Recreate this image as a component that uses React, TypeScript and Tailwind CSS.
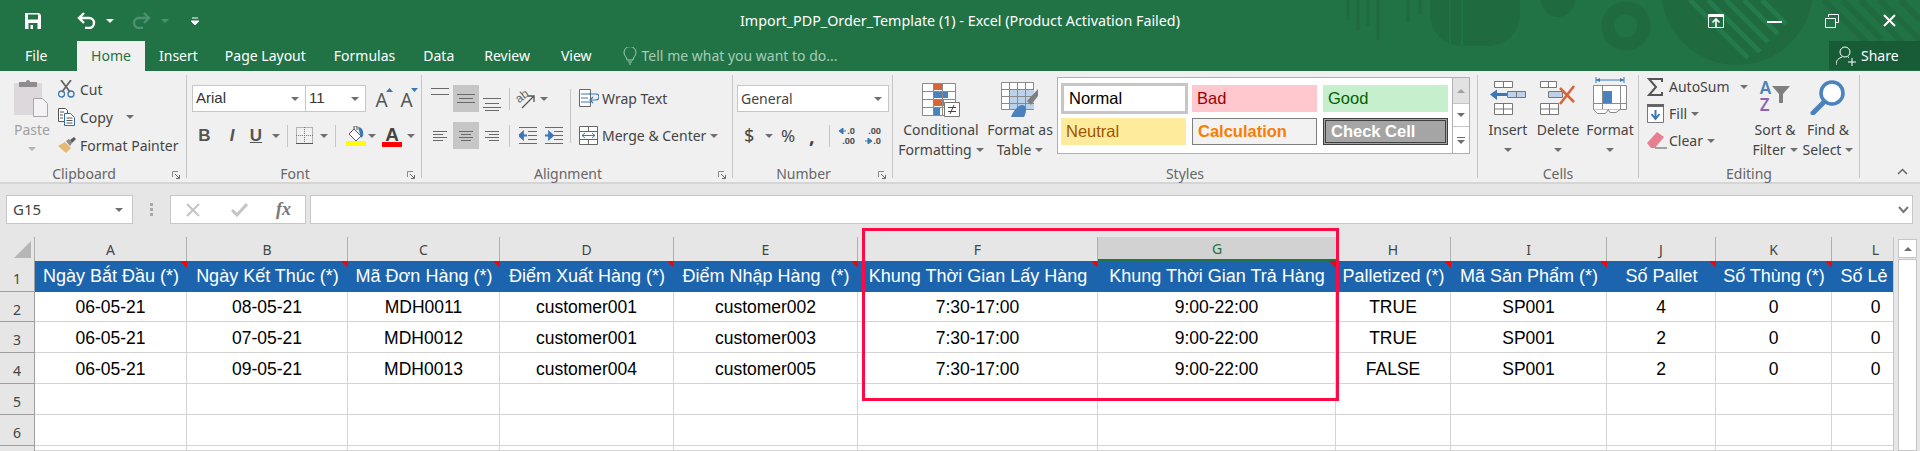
import { ReactNode } from "react";

const Caret = ({ className = "" }: { className?: string }) => (
  <svg width="8" height="4" viewBox="0 0 8 4" className={`shrink-0 ${className}`}>
    <path d="M0 0h8L4 4z" fill="#6f6f6f" />
  </svg>
);

const Sep = ({ className = "" }: { className?: string }) => (
  <span className={`block w-px bg-[#c6c6c6] shrink-0 ${className}`} />
);

const Launcher = () => (
  <svg width="8" height="8" viewBox="0 0 8 8" className="absolute right-[6px] bottom-[-1px]">
    <path d="M.5 6V.5H6" fill="none" stroke="#8a8a8a" />
    <path d="M3 3l4 4M7.5 4v3.5H4" fill="none" stroke="#6a6a6a" />
  </svg>
);

const Group = ({
  className,
  label,
  launcher,
  children,
}: {
  className: string;
  label: string;
  launcher?: boolean;
  children: ReactNode;
}) => (
  <div className={`relative flex flex-col h-[103px] border-r border-[#c6c6c6] shrink-0 ${className}`}>
    <div className="h-[93px]">{children}</div>
    <div className={`h-[10px] flex items-center justify-center text-[14px] text-[#666] ${launcher ? "pr-[18px]" : ""}`}>
      {label}
    </div>
    {launcher && <Launcher />}
  </div>
);

const BigButton = ({
  className,
  icon,
  line1,
  line2,
}: {
  className: string;
  icon: ReactNode;
  line1: string;
  line2?: string;
}) => (
  <div className={`flex flex-col items-center shrink-0 ${className}`}>
    <div className="h-[45px] pt-[5px] flex justify-center">{icon}</div>
    <div className="h-[20px] leading-[20px] whitespace-nowrap">{line1}</div>
    <div className="h-[20px] leading-[20px] whitespace-nowrap flex items-center gap-[4px]">
      {line2}
      <Caret />
    </div>
  </div>
);

const Lines = ({ xs, ys }: { xs: [number, number][]; ys: number[] }) => (
  <svg width="26" height="27" viewBox="0 0 26 27">
    {ys.map((y, i) => {
      const [a, b] = xs[i % xs.length];
      return <path key={y} d={`M${a} ${y + 0.5}H${b}`} stroke="#6a6a6a" />;
    })}
  </svg>
);

const AlignCell = ({ active, xs, ys }: { active?: boolean; xs: [number, number][]; ys: number[] }) => (
  <div className={`w-[26px] h-[27px] shrink-0 ${active ? "bg-[#c6c6c6]" : ""}`}>
    <Lines xs={xs} ys={ys} />
  </div>
);

const TitleArt = () => (
  <svg width="640" height="71" viewBox="1280 0 640 71" className="absolute right-0 top-0">
    <g fill="none" stroke="#1f6a3e">
      <path d="M1348 0v20M1358 0v30M1368 0v26M1378 0v40" strokeWidth="3" />
      <path d="M1408 0v22M1420 0v14" strokeWidth="3" />
      <circle cx="1626" cy="26" r="18" strokeWidth="13" />
    </g>
    <path d="M1430 0h90v14a32 32 0 0 1-32 32h-26a32 32 0 0 1-32-32z" fill="#1f6a3e" />
    <path d="M1450 0v46M1462 0v46" stroke="#217346" strokeWidth="2" />
    <circle cx="1558" cy="0" r="17" fill="#1f6a3e" />
    <circle cx="1737" cy="-11" r="76" fill="#1f6a3e" />
    <path d="M1690 0l58 58M1708 0l52 52M1726 0l42 42M1744 0l34 34M1762 0l24 24" stroke="#237a4a" strokeWidth="5" />
    <path d="M1824 0l52 52M1842 0l40 40M1860 0l60 60M1880 0l40 40M1900 0l20 20" stroke="#1f6a3e" strokeWidth="6" />
  </svg>
);

const SaveIcon = () => (
  <svg width="16" height="16" viewBox="0 0 16 16" className="shrink-0">
    <path
      fillRule="evenodd"
      d="M0 0h14l2 2v14H0zM3 1.500v5h10v-5zM3.500 10v6h9v-6z"
      fill="#fff"
    />
    <path d="M5.500 12h2.500v4H5.500z" fill="#fff" />
  </svg>
);

const UndoIcon = ({ color }: { color: string }) => (
  <svg width="19" height="17" viewBox="0 0 19 17" className="shrink-0">
    <path d="M7 1L2 6l5 5M2 6h10a5 5 0 0 1 0 10H8" fill="none" stroke={color} strokeWidth="2.400" />
  </svg>
);

const PasteIcon = () => (
  <svg width="36" height="38" viewBox="0 0 36 38" className="shrink-0">
    <path d="M0 4h28v32H0z" fill="#dcd8dc" />
    <path d="M5 3h7a2 2 0 0 1 4 0h7v5H5z" fill="#8f8b8f" />
    <path d="M19.500 19.500h9l5 5v13h-14z" fill="#f4f2f4" stroke="#a9a5a9" />
  </svg>
);

const CutIcon = () => (
  <svg width="17" height="18" viewBox="0 0 17 18">
    <path d="M3 0l9 12M13 0L4 12" stroke="#666" strokeWidth="1.800" fill="none" />
    <circle cx="3.500" cy="14" r="3" fill="none" stroke="#3b78b5" strokeWidth="1.300" />
    <circle cx="13" cy="14" r="3" fill="none" stroke="#3b78b5" strokeWidth="1.300" />
  </svg>
);

const CopyIcon = () => (
  <svg width="17" height="18" viewBox="0 0 17 18">
    <path d="M.5.500h7l2 2v11H.500z" fill="#fff" stroke="#555" />
    <path d="M6.500 5.500h6l4 4v8h-10z" fill="#fff" stroke="#2f6ea5" />
    <path d="M2 4h4M2 7h3M2 10h3M8.500 10h6M8.500 12.500h6M8.500 15h6" stroke="#555" />
  </svg>
);

const PainterIcon = () => (
  <svg width="18" height="16" viewBox="0 0 18 16">
    <path d="M0 9l7-4 6 6-5 5z" fill="#e7b872" />
    <path d="M8 4l3-2 3 4-2 3z" fill="#8a8a8a" />
    <path d="M12 3l4-3 2 2-4 4z" fill="#5a5a5a" />
  </svg>
);

const FontSizeIcon = ({ up }: { up?: boolean }) => (
  <span className="relative w-[15px] h-[24px] text-[19px] leading-[26px] text-center text-[#555]">
    A
    <svg width="7" height="4" viewBox="0 0 7 4" className="absolute right-[-4px] top-[1px]">
      <path d={up ? "M0 4h7L3.500 0z" : "M0 0h7L3.500 4z"} fill="#3b78b5" />
    </svg>
  </span>
);

const BorderIcon = () => (
  <svg width="17" height="17" viewBox="0 0 17 17" className="ml-[8px] shrink-0">
    <path d="M.5.500h16v16H.500z" fill="none" stroke="#777" strokeDasharray="1 1" />
    <path d="M8.500 0v17M0 8.500h17" stroke="#777" strokeDasharray="1 1" />
    <path d="M0 16.500h17" stroke="#555" />
  </svg>
);

const FillIcon = () => (
  <svg width="20" height="20" viewBox="0 0 20 20" className="ml-[10px] shrink-0">
    <path d="M8 3l7 7-5 5-7-7z" fill="#fff" stroke="#555" />
    <path d="M8 3V0h3v4" fill="none" stroke="#555" />
    <path d="M12 1c4 0 6 4 5 9l-2 2-1-4z" fill="#3b78b5" />
    <path d="M0 15h20v5H0z" fill="#ffff00" />
  </svg>
);

const FontColorIcon = () => (
  <span className="relative w-[20px] h-[24px] ml-[6px] shrink-0 text-center text-[19px] leading-[22px] font-bold text-[#444] font-['Liberation_Sans',sans-serif]">
    A
    <span className="absolute left-0 bottom-[1px] w-[20px] h-[5px] bg-[#ff0000]" />
  </span>
);

const OrientIcon = () => (
  <svg width="20" height="20" viewBox="0 0 20 20" className="shrink-0 overflow-visible">
    <text x="0" y="11" fontSize="12" fill="#666" transform="rotate(-38 6 10)" fontFamily="Liberation Sans">ab</text>
    <path d="M5 19L17 7M11 7h6v6" fill="none" stroke="#555" strokeWidth="1.300" />
  </svg>
);

const WrapIcon = () => (
  <svg width="20" height="19" viewBox="0 0 20 19" className="shrink-0">
    <path d="M.5.500h11v17H.500z" fill="#fff" stroke="#666" />
    <path d="M2 5h9M2 9h7M2 13h9" stroke="#3b78b5" />
    <path d="M10 5h7a2.500 2.500 0 0 1 0 6h-5M14 8l-3 3 3 3" fill="none" stroke="#3b78b5" strokeWidth="1.200" />
  </svg>
);

const MergeIcon = () => (
  <svg width="19" height="19" viewBox="0 0 19 19" className="shrink-0">
    <path d="M.5.500h18v18H.500z" fill="#fff" stroke="#666" />
    <path d="M0 5.500h19M0 13.500h19M9.500 0v5M9.500 14v5" stroke="#666" />
    <path d="M3 9.500h13M6 7L3 9.500 6 12M13 7l3 2.500-3 2.500" fill="none" stroke="#3b78b5" />
  </svg>
);

const IndentIcon = ({ flip }: { flip?: boolean }) => (
  <svg width="18" height="18" viewBox="0 0 18 18" className={`shrink-0 ${flip ? "ml-[8px]" : "ml-[9px]"}`}>
    <path d="M0 .500h18M9 4.500h9M9 8.500h9M9 12.500h9M0 16.500h18" stroke="#6a6a6a" />
    {flip ? (
      <path d="M0 8.500h6M4 5l4 3.500-4 3.500z" stroke="#3b78b5" strokeWidth="1.800" fill="#3b78b5" />
    ) : (
      <path d="M8 8.500H3M4 5L0 8.500 4 12z" stroke="#3b78b5" strokeWidth="1.800" fill="#3b78b5" />
    )}
  </svg>
);

const DecimalIcon = ({ more }: { more?: boolean }) => (
  <div className="relative w-[16px] h-[20px] shrink-0 text-[9px] leading-[10px] font-bold text-[#555] font-['Noto_Sans',sans-serif]">
    <div className="absolute top-0 right-0">{more ? ".00" : ".0"}</div>
    <div className="absolute bottom-0 right-0">{more ? ".0" : ".00"}</div>
    <svg width="7" height="6" viewBox="0 0 7 6" className={`absolute left-0 ${more ? "bottom-[2px]" : "top-[2px]"}`}>
      <path d={more ? "M0 3h4M3 0l4 3-4 3z" : "M7 3H3M4 0L0 3l4 3z"} stroke="#3b78b5" fill="#3b78b5" />
    </svg>
  </div>
);

const CondIcon = () => (
  <svg width="38" height="34" viewBox="0 0 38 34">
    <path d="M.5.500h33v32H.500z" fill="#fff" stroke="#8a8a8a" />
    <path d="M12 1h8v6h-8z" fill="#d9643a" />
    <path d="M12 9h14v6H12z" fill="#4a82bd" />
    <path d="M12 17h10v6H12z" fill="#d9643a" />
    <path d="M12 25h6v7h-6z" fill="#4a82bd" />
    <path d="M0 8.500h34M0 16.500h34M0 24.500h34M11.500 0v33M20.500 0v33" stroke="#8a8a8a" />
    <path d="M22.500 19.500h15v14h-15z" fill="#fff" stroke="#777" />
    <path d="M26 24.500h8M26 28.500h8M32 22l-4 9" stroke="#444" fill="none" />
  </svg>
);

const TableIcon = () => (
  <svg width="38" height="36" viewBox="0 0 38 36">
    <path d="M.5.500h32v27H.500z" fill="#fff" stroke="#8a8a8a" />
    <path d="M9 7h24v20H9z" fill="#bcd2ea" />
    <path d="M0 7.500h33M0 14.500h33M0 21.500h33M8.500 0v28M16.500 0v28M24.500 0v28" stroke="#8a8a8a" />
    <path d="M26 19L37 7v7l-7 9z" fill="#7f7f7f" />
    <path d="M10 35c2-6 7-12 11-12 5 0 5 6 2 12z" fill="#4a82bd" />
  </svg>
);

const InsertIcon = () => (
  <svg width="36" height="36" viewBox="0 0 36 36">
    <path d="M4.500 1.500h18v6h-18zM13.500 1.500v6M4.500 23.500h18v11h-18zM4.500 29h18M13.500 23v12" fill="#fff" stroke="#777" />
    <path d="M17.500 11.500h18v6h-18z" fill="#bcd2ea" stroke="#777" />
    <path d="M26.500 11v7" stroke="#777" />
    <path d="M0 14.500l7-5v3.500h10v3H7V20z" fill="#3b78b5" />
  </svg>
);

const DeleteIcon = () => (
  <svg width="36" height="36" viewBox="0 0 36 36">
    <path d="M.5 1.500h16v6h-16zM8.500 1.500v6M.5 23.500h18v11H.500zM.5 29h18M9.500 23v12" fill="#fff" stroke="#777" />
    <path d="M8.500 11.500h14v6h-14z" fill="#bcd2ea" stroke="#777" />
    <path d="M20 8l14 14M34 6L20 24" stroke="#d9643a" strokeWidth="2.600" />
  </svg>
);

const FormatIcon = () => (
  <svg width="34" height="38" viewBox="0 0 34 38" className="-mt-[4px]">
    <path d="M3 4h28M3 1v6M31 1v6" stroke="#3b78b5" fill="none" />
    <path d="M7 2L3 4l4 2zM27 2l4 2-4 2z" fill="#3b78b5" />
    <path d="M.5 9.500h33v24H.500z" fill="#fff" stroke="#8a8a8a" />
    <path d="M0 27.500h34M9.500 10v24M27.500 10v24" stroke="#8a8a8a" />
    <path d="M10 15h9v12h-9z" fill="#4a82bd" />
    <path d="M.5 33.500l4 4h8l3-4M15 33.500l2 3h6l4-3" fill="#fff" stroke="#8a8a8a" />
  </svg>
);

const SigmaIcon = () => (
  <svg width="16" height="18" viewBox="0 0 16 18">
    <path d="M15 4V1H2l7 8-7 8h13v-3" fill="none" stroke="#555" strokeWidth="2" />
  </svg>
);

const FillDownIcon = () => (
  <svg width="17" height="19" viewBox="0 0 17 19">
    <path d="M.5.500h16v18H.500z" fill="#fff" stroke="#777" />
    <path d="M0 0h17v3H0z" fill="#666" />
    <path d="M8.500 6v8M4.500 10l4 5 4-5" fill="none" stroke="#3b78b5" strokeWidth="2" />
  </svg>
);

const EraserIcon = () => (
  <svg width="20" height="17" viewBox="0 0 20 17">
    <path d="M0 11L10 0l7 5-9 11H4z" fill="#e87f90" />
    <path d="M8 16h12" stroke="#555" />
  </svg>
);

const SortIcon = () => (
  <div className="flex items-start gap-[1px] -mt-[1px]">
    <div className="flex flex-col text-[17px] leading-[17px] font-semibold">
      <span className="text-[#4a82bd]">A</span>
      <span className="text-[#8e62b8]">Z</span>
    </div>
    <svg width="18" height="18" viewBox="0 0 18 18" className="mt-[7px]">
      <path d="M0 0h18l-7 8v9H7V8z" fill="#7f7f7f" />
    </svg>
  </div>
);

const FindIcon = () => (
  <svg width="36" height="35" viewBox="0 0 36 35">
    <circle cx="22" cy="13" r="11" fill="#fff" stroke="#4a82bd" strokeWidth="3.500" />
    <path d="M14 22L3 33" stroke="#4a82bd" strokeWidth="5" strokeLinecap="round" />
  </svg>
);

const StyleCell = ({ className, children }: { className: string; children: string }) => (
  <div className={`flex items-center pl-[5px] shrink-0 font-['Liberation_Sans',sans-serif] text-[16.500px] ${className}`}>
    {children}
  </div>
);

const tabs = [
  { label: "Insert", className: "ml-[14px]" },
  { label: "Page Layout", className: "ml-[27px]" },
  { label: "Formulas", className: "ml-[28px]" },
  { label: "Data", className: "ml-[28px]" },
  { label: "Review", className: "ml-[30px]" },
  { label: "View", className: "ml-[31px]" },
];

const columns = ["A", "B", "C", "D", "E", "F", "G", "H", "I", "J", "K", "L"];

const headers = [
  "Ngày Bắt Đầu (*)",
  "Ngày Kết Thúc (*)",
  "Mã Đơn Hàng (*)",
  "Điểm Xuất Hàng (*)",
  "Điểm Nhập Hàng  (*)",
  "Khung Thời Gian Lấy Hàng",
  "Khung Thời Gian Trả Hàng",
  "Palletized (*)",
  "Mã Sản Phẩm (*)",
  "Số Pallet",
  "Số Thùng (*)",
  "Số Lẻ (*)",
];

const rows = [
  ["06-05-21", "08-05-21", "MDH0011", "customer001", "customer002", "7:30-17:00", "9:00-22:00", "TRUE", "SP001", "4", "0", "0"],
  ["06-05-21", "07-05-21", "MDH0012", "customer001", "customer003", "7:30-17:00", "9:00-22:00", "TRUE", "SP001", "2", "0", "0"],
  ["06-05-21", "09-05-21", "MDH0013", "customer004", "customer005", "7:30-17:00", "9:00-22:00", "FALSE", "SP001", "2", "0", "0"],
  Array(12).fill(""),
  Array(12).fill(""),
  Array(12).fill(""),
];

const RowHead = ({ n }: { n: number }) => (
  <div className="flex justify-center pt-[8px] text-[14px] leading-[20px] text-[#444] bg-[#e6e6e6] border-r border-b border-[#9f9f9f]">
    {n}
  </div>
);

export default function App() {
  return (
    <div className="relative w-[1920px] h-[451px] overflow-hidden bg-[#e6e6e6] text-[14px] text-[#444] font-['Noto_Sans',sans-serif]">
      <div className="relative h-[71px] bg-[#217346] text-white overflow-hidden">
        <TitleArt />
        <div className="relative h-[41px] flex items-center">
          <div className="ml-[25px]"><SaveIcon /></div>
          <div className="ml-[36px]"><UndoIcon color="#fff" /></div>
          <Caret className="ml-[10px] [&>path]:fill-white" />
          <div className="ml-[18px] -scale-x-100"><UndoIcon color="#4f9070" /></div>
          <Caret className="ml-[10px] [&>path]:fill-[#4f9070]" />
          <svg width="8" height="8" viewBox="0 0 8 8" className="ml-[22px]">
            <path d="M1 1h6M0 4h8L4 8z" stroke="#fff" fill="#fff" />
          </svg>
          <div className="absolute left-0 right-0 top-0 h-[41px] flex items-center justify-center text-[14.300px]">
            Import_PDP_Order_Template (1) - Excel (Product Activation Failed)
          </div>
          <div className="ml-auto mr-[24px] flex items-center">
            <svg width="16" height="14" viewBox="0 0 16 14">
              <path d="M.5.500h15v13H.500z" fill="none" stroke="#fff" />
              <path d="M0 2h16" stroke="#fff" strokeWidth="2" />
              <path d="M8 13V5M4.500 8.500L8 5l3.500 3.500" fill="none" stroke="#fff" strokeWidth="1.600" />
            </svg>
            <span className="ml-[43px] w-[15px] h-[2px] bg-white mt-[3px]" />
            <svg width="14" height="14" viewBox="0 0 14 14" className="ml-[43px]">
              <path d="M3.500 3V.5h10v8H11" fill="none" stroke="#fff" />
              <path d="M.5 4.500h10v9H.500z" fill="none" stroke="#fff" />
            </svg>
            <svg width="13" height="13" viewBox="0 0 13 13" className="ml-[44px]">
              <path d="M1 1l11 11M12 1L1 12" stroke="#fff" strokeWidth="2" />
            </svg>
          </div>
        </div>
        <div className="relative h-[30px] flex items-stretch text-[14px] leading-[30px]">
          <div className="ml-[25px] w-[52px]">File</div>
          <div className="w-[68px] text-center bg-[#f0f0f0] text-[#217346]">Home</div>
          {tabs.map((t) => (
            <div key={t.label} className={`whitespace-nowrap ${t.className}`}>{t.label}</div>
          ))}
          <svg width="14" height="18" viewBox="0 0 14 18" className="ml-[31px] mt-[6px]">
            <path d="M4 13c0-3-3-4-3-7.500a6 6 0 0 1 12 0C13 9 10 10 10 13zM5 15h4M6 17h2" fill="none" stroke="#a4ccb6" />
          </svg>
          <div className="ml-[5px] text-[#a4ccb6] whitespace-nowrap">Tell me what you want to do...</div>
          <div className="ml-auto w-[91px] h-[29px] bg-[#185c37] flex items-center pl-[7px]">
            <svg width="20" height="20" viewBox="0 0 20 20">
              <circle cx="9" cy="6" r="5" fill="none" stroke="#fff" />
              <path d="M0 19c0-5 3-7 6-8M12 11l1 .5M12 16h8M16 12v8" fill="none" stroke="#fff" />
            </svg>
            <span className="ml-[5px]">Share</span>
          </div>
        </div>
      </div>

      <div className="h-[113px] bg-[#f0f0f0] border-b-2 border-[#d5d5d5] flex items-start pt-[4px]">
        <Group className="w-[187px]" label="Clipboard" launcher>
          <div className="flex">
            <div className="w-[58px] flex flex-col items-center pl-[6px] text-[#a0a0a0]">
              <div className="h-[44px] pt-[4px]"><PasteIcon /></div>
              <div className="h-[22px] leading-[22px]">Paste</div>
              <Caret className="mt-[6px] [&>path]:fill-[#b5b5b5]" />
            </div>
            <div className="flex flex-col">
              <div className="h-[28px] flex items-center"><div className="w-[22px]"><CutIcon /></div>Cut</div>
              <div className="h-[28px] flex items-center"><div className="w-[22px]"><CopyIcon /></div>Copy<Caret className="ml-[13px]" /></div>
              <div className="h-[28px] flex items-center whitespace-nowrap"><div className="w-[22px]"><PainterIcon /></div>Format Painter</div>
            </div>
          </div>
        </Group>

        <Group className="w-[235px]" label="Font" launcher>
          <div className="pl-[5px] pt-[10px]">
            <div className="flex h-[27px] items-center">
              <div className="w-[114px] h-[27px] bg-white border border-[#c6c6c6] flex items-center justify-between pl-[3px] pr-[6px] font-['Liberation_Sans',sans-serif] text-[15px] text-[#333]">
                Arial<Caret />
              </div>
              <div className="w-[60px] h-[27px] bg-white border border-l-0 border-[#c6c6c6] flex items-center justify-between pl-[3px] pr-[6px] font-['Liberation_Sans',sans-serif] text-[15px] text-[#333]">
                11<Caret />
              </div>
              <div className="ml-[8px] flex gap-[10px]"><FontSizeIcon up /><FontSizeIcon /></div>
            </div>
            <div className="flex h-[27px] mt-[10px] items-center text-[#555] font-['Liberation_Sans',sans-serif] text-[17px]">
              <div className="w-[25px] text-center font-bold">B</div>
              <div className="w-[30px] text-center font-bold italic">I</div>
              <div className="w-[18px] text-center font-bold underline">U</div>
              <Caret className="ml-[7px]" />
              <Sep className="ml-[7px] h-[22px]" />
              <BorderIcon />
              <Caret className="ml-[7px]" />
              <Sep className="ml-[7px] h-[22px]" />
              <FillIcon />
              <Caret className="ml-[2px]" />
              <FontColorIcon />
              <Caret className="ml-[5px]" />
            </div>
          </div>
        </Group>

        <Group className="w-[311px]" label="Alignment" launcher>
          <div className="pl-[5px] pt-[10px] flex">
            <div>
              <div className="flex items-center h-[27px]">
                <AlignCell xs={[[4, 22]]} ys={[3, 9]} />
                <AlignCell active xs={[[4, 22], [6, 20]]} ys={[9, 13, 17]} />
                <AlignCell xs={[[4, 22], [6, 20]]} ys={[13, 18, 22, 25]} />
                <Sep className="ml-[4px] h-[22px]" />
                <div className="ml-[7px]"><OrientIcon /></div>
                <Caret className="ml-[3px]" />
              </div>
              <div className="flex items-center h-[27px] mt-[10px]">
                <AlignCell xs={[[6, 20], [6, 16]]} ys={[9, 12, 15, 18]} />
                <AlignCell active xs={[[6, 20], [8, 18]]} ys={[9, 12, 15, 18]} />
                <AlignCell xs={[[6, 20], [10, 20]]} ys={[9, 12, 15, 18]} />
                <Sep className="ml-[4px] h-[22px]" />
                <IndentIcon />
                <IndentIcon flip />
              </div>
            </div>
            <Sep className="ml-[7px] h-[54px] mt-[4px]" />
            <div className="ml-[8px]">
              <div className="flex items-center h-[27px]"><WrapIcon /><span className="ml-[3px]">Wrap Text</span></div>
              <div className="flex items-center h-[27px] mt-[10px] whitespace-nowrap">
                <MergeIcon /><span className="ml-[4px]">Merge &amp; Center</span><Caret className="ml-[4px]" />
              </div>
            </div>
          </div>
        </Group>

        <Group className="w-[160px]" label="Number" launcher>
          <div className="pl-[4px] pt-[10px]">
            <div className="w-[152px] h-[27px] bg-white border border-[#c6c6c6] flex items-center justify-between pl-[3px] pr-[6px]">
              General<Caret />
            </div>
            <div className="flex items-center h-[27px] mt-[10px] pl-[7px]">
              <span className="w-[10px] text-[18px]">$</span>
              <Caret className="ml-[11px]" />
              <span className="ml-[8px] w-[15px] text-[17px]">%</span>
              <span className="ml-[13px] w-[6px] text-[20px] font-bold leading-[20px]">,</span>
              <Sep className="ml-[14px] h-[22px]" />
              <div className="ml-[9px]"><DecimalIcon /></div>
              <div className="ml-[10px]"><DecimalIcon more /></div>
            </div>
          </div>
        </Group>

        <Group className="w-[585px]" label="Styles">
          <div className="flex">
            <BigButton className="ml-[8px] w-[80px]" icon={<div className="pt-[3px]"><CondIcon /></div>} line1="Conditional" line2="Formatting" />
            <BigButton className="ml-[6px] w-[66px]" icon={<div className="pt-[2px]"><TableIcon /></div>} line1="Format as" line2="Table" />
            <div className="ml-[4px] mt-[2px] w-[413px] h-[77px] bg-white border border-[#b0b0b0] flex">
              <div className="w-[394px] pl-[3px] pt-[5px]">
                <div className="flex">
                  <StyleCell className="w-[127px] h-[31px] border-[3px] border-[#c6c6c6] text-black">Normal</StyleCell>
                  <StyleCell className="w-[125px] h-[27px] mt-[2px] ml-[4px] bg-[#ffc7ce] text-[#9c0006]">Bad</StyleCell>
                  <StyleCell className="w-[125px] h-[27px] mt-[2px] ml-[6px] bg-[#c6efce] text-[#006100]">Good</StyleCell>
                </div>
                <div className="flex mt-[4px]">
                  <StyleCell className="w-[125px] h-[27px] bg-[#ffeb9c] text-[#9c5700]">Neutral</StyleCell>
                  <StyleCell className="w-[125px] h-[27px] ml-[6px] bg-[#f2f2f2] border border-[#7f7f7f] text-[#fa7d00] font-bold">Calculation</StyleCell>
                  <StyleCell className="w-[125px] h-[27px] ml-[6px] bg-[#a5a5a5] border-[3px] border-double border-[#3f3f3f] text-white font-bold">Check Cell</StyleCell>
                </div>
              </div>
              <div className="flex-1 flex flex-col border-l border-[#b0b0b0]">
                <div className="h-[26px] bg-[#e2e2e2] flex items-center justify-center border-b border-[#c6c6c6]">
                  <Caret className="rotate-180 [&>path]:fill-[#a0a0a0]" />
                </div>
                <div className="h-[23px] flex items-center justify-center border-b border-[#c6c6c6]"><Caret /></div>
                <div className="flex-1 flex flex-col items-center justify-center gap-[2px]">
                  <span className="w-[8px] h-px bg-[#6f6f6f]" />
                  <Caret />
                </div>
              </div>
            </div>
          </div>
        </Group>

        <Group className="w-[161px]" label="Cells">
          <div className="flex">
            <BigButton className="ml-[5px] w-[50px]" icon={<InsertIcon />} line1="Insert" />
            <BigButton className="w-[50px]" icon={<DeleteIcon />} line1="Delete" />
            <BigButton className="w-[54px]" icon={<FormatIcon />} line1="Format" />
          </div>
        </Group>

        <Group className="w-[221px]" label="Editing">
          <div className="flex">
            <div className="w-[111px] pl-[8px] -mt-[1px]">
              <div className="h-[27px] flex items-center -mt-[1px]"><div className="w-[22px]"><SigmaIcon /></div>AutoSum<Caret className="ml-[10px]" /></div>
              <div className="h-[27px] flex items-center"><div className="w-[22px]"><FillDownIcon /></div>Fill<Caret className="ml-[4px]" /></div>
              <div className="h-[27px] flex items-center"><div className="w-[22px]"><EraserIcon /></div>Clear<Caret className="ml-[4px]" /></div>
            </div>
            <BigButton className="w-[50px]" icon={<SortIcon />} line1="Sort &" line2="Filter" />
            <BigButton className="ml-[3px] w-[50px]" icon={<FindIcon />} line1="Find &" line2="Select" />
          </div>
        </Group>

        <div className="flex-1 h-[103px] flex items-end justify-end pr-[12px] pb-[3px]">
          <svg width="11" height="7" viewBox="0 0 11 7">
            <path d="M1 6l4.500-4.500L10 6" fill="none" stroke="#666" strokeWidth="1.500" />
          </svg>
        </div>
      </div>

      <div className="h-[53px] pt-[11px] flex items-start">
        <div className="ml-[6px] w-[127px] h-[29px] bg-white border border-[#c6c6c6] flex items-center justify-between pl-[6px] pr-[9px] text-[15px]">
          G15<Caret />
        </div>
        <div className="w-[37px] h-[29px] flex flex-col items-center justify-center gap-[2px]">
          <span className="w-[3px] h-[3px] bg-[#a8a8a8]" />
          <span className="w-[3px] h-[3px] bg-[#a8a8a8]" />
          <span className="w-[3px] h-[3px] bg-[#a8a8a8]" />
        </div>
        <div className="w-[136px] h-[29px] bg-white border border-[#c6c6c6] flex items-center">
          <svg width="16" height="16" viewBox="0 0 16 16" className="ml-[14px]">
            <path d="M2 2l12 12M14 2L2 14" stroke="#c4c4c4" strokeWidth="2" />
          </svg>
          <svg width="17" height="15" viewBox="0 0 17 15" className="ml-[30px]">
            <path d="M1 8l5 5L16 2" fill="none" stroke="#c4c4c4" strokeWidth="3" />
          </svg>
          <span className="ml-[28px] font-['Liberation_Serif',serif] italic font-bold text-[18px] text-[#777]">fx</span>
        </div>
        <div className="ml-[4px] flex-1 mr-[7px] h-[29px] bg-white border border-[#c6c6c6] flex items-center justify-end pr-[3px]">
          <svg width="11" height="8" viewBox="0 0 11 8">
            <path d="M1 1l4.500 5L10 1" fill="none" stroke="#777" strokeWidth="2" />
          </svg>
        </div>
      </div>

      <div className="flex h-[214px]">
        <div className="w-[1894px] overflow-hidden bg-white border-r border-[#c6c6c6]">
          <div className="w-[1920px] grid grid-cols-[35px_152px_161px_152px_174px_184px_240px_238px_115px_156px_109px_116px_88px] grid-rows-[24px_31px_30px_31px_31px_31px_31px_5px]">
            <div className="bg-[#e6e6e6] border-r border-[#b0b0b0] flex items-end justify-end pr-[3px] pb-[3px]">
              <svg width="17" height="17" viewBox="0 0 17 17"><path d="M17 0v17H0z" fill="#b5b5b5" /></svg>
            </div>
            {columns.map((c) => (
              <div
                key={c}
                className={`relative flex items-center justify-center ${
                  c === "G"
                    ? "bg-[#d2d2d2] text-[#217346] border-b-2 border-[#217346]"
                    : "bg-[#e6e6e6] text-[#444] border-r border-[#b0b0b0]"
                }`}
              >
                {c}
              </div>
            ))}

            <RowHead n={1} />
            {headers.map((h, i) => (
              <div key={h} className="relative flex items-center justify-center bg-[#1c65ae] text-white text-[18px] whitespace-pre overflow-hidden font-['Liberation_Sans',sans-serif]">
                {h}
                {i < 11 && (
                  <svg width="7" height="7" viewBox="0 0 7 7" className="absolute right-0 top-0">
                    <path d="M0 0h7v7z" fill="#ff0000" />
                  </svg>
                )}
              </div>
            ))}

            {rows.map((r, ri) => [
              <RowHead key={`h${ri}`} n={ri + 2} />,
              ...r.map((v, ci) => (
                <div
                  key={`${ri}-${ci}`}
                  className="flex items-center justify-center pt-[2px] border-r border-b border-[#d4d4d4] bg-white text-black text-[17.500px] font-['Liberation_Sans',sans-serif]"
                >
                  {v}
                </div>
              )),
            ])}
          </div>
        </div>
        <div className="flex-1 pl-[4px] pt-[2px] flex flex-col">
          <div className="w-[19px] h-[19px] bg-white border border-[#c6c6c6] flex items-center justify-center">
            <Caret className="rotate-180" />
          </div>
          <div className="w-[19px] flex-1 bg-white border border-[#c6c6c6] mt-px" />
        </div>
      </div>

      <div className="absolute left-[862px] top-[228px] w-[477px] h-[173px] border-[3px] border-[#ff0a45]" />
    </div>
  );
}
